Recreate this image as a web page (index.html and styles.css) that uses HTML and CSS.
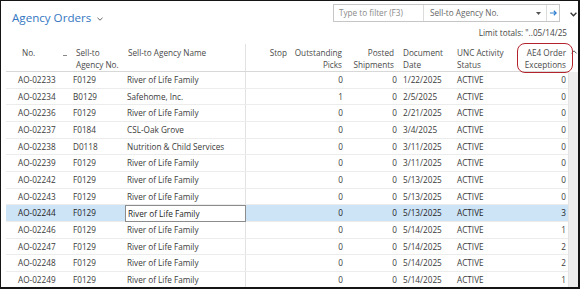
FILE: index.html
```html
<!DOCTYPE html>
<html lang="en">
<head>
    <meta charset="UTF-8">
    <title>Agency Orders</title>
    <link rel="stylesheet" href="styles.css">
</head>
<body>
<div class="page">
    <!-- title and filter -->
    <div class="topbar">
        <div class="title">Agency Orders
            <svg class="title-caret" width="6" height="4" viewBox="0 0 6 4"><path d="M0.5 0.8 L3 3.2 L5.5 0.8" fill="none" stroke="#666" stroke-width="1"/></svg>
        </div>
        <div class="filter">
            <div class="filter-input">Type to filter (F3)</div>
            <div class="filter-field">
                <span>Sell-to Agency No.</span>
                <svg width="5" height="3" viewBox="0 0 5 3"><path d="M0 0 L5 0 L2.5 3 Z" fill="#555"/></svg>
            </div>
            <div class="filter-go">
                <svg width="7" height="6" viewBox="0 0 7 6"><path d="M0 3 H6 M3.8 0.8 L6.2 3 L3.8 5.2" fill="none" stroke="#2f7fd0" stroke-width="1.2"/></svg>
            </div>
        </div>
        <div class="collapse">
            <svg width="7" height="5" viewBox="0 0 7 5"><path d="M0.6 0.8 L3.5 3.8 L6.4 0.8" fill="none" stroke="#333" stroke-width="1.3"/></svg>
        </div>
    </div>

    <div class="limit">Limit totals: "..05/14/25</div>

    <!-- list -->
    <div class="list">
        <div class="grid">
            <div class="head">
                <div class="c1 sortcol"><span>No.</span><span class="sort-mark"></span></div>
                <div class="c2">Sell-to<br>Agency No.</div>
                <div class="c3">Sell-to Agency Name</div>
                <div class="c4">Stop</div>
                <div class="c5">Outstanding<br>Picks</div>
                <div class="c6">Posted<br>Shipments</div>
                <div class="c7">Document<br>Date</div>
                <div class="c8">UNC Activity<br>Status</div>
                <div class="c9 marked">AE4 Order<br>Exceptions<span class="mark"></span></div>
            </div>

            <div class="row">
                <div class="c1">AO-02233</div><div class="c2">F0129</div><div class="c3">River of Life Family</div><div class="c4"></div>
                <div class="c5">0</div><div class="c6">0</div><div class="c7">1/22/2025</div><div class="c8">ACTIVE</div><div class="c9">0</div>
            </div>
            <div class="row">
                <div class="c1">AO-02234</div><div class="c2">B0129</div><div class="c3">Safehome, Inc.</div><div class="c4"></div>
                <div class="c5">1</div><div class="c6">0</div><div class="c7">2/5/2025</div><div class="c8">ACTIVE</div><div class="c9">0</div>
            </div>
            <div class="row">
                <div class="c1">AO-02236</div><div class="c2">F0129</div><div class="c3">River of Life Family</div><div class="c4"></div>
                <div class="c5">0</div><div class="c6">0</div><div class="c7">2/21/2025</div><div class="c8">ACTIVE</div><div class="c9">0</div>
            </div>
            <div class="row">
                <div class="c1">AO-02237</div><div class="c2">F0184</div><div class="c3">CSL-Oak Grove</div><div class="c4"></div>
                <div class="c5">0</div><div class="c6">0</div><div class="c7">3/4/2025</div><div class="c8">ACTIVE</div><div class="c9">0</div>
            </div>
            <div class="row">
                <div class="c1">AO-02238</div><div class="c2">D0118</div><div class="c3">Nutrition &amp; Child Services</div><div class="c4"></div>
                <div class="c5">0</div><div class="c6">0</div><div class="c7">3/11/2025</div><div class="c8">ACTIVE</div><div class="c9">0</div>
            </div>
            <div class="row">
                <div class="c1">AO-02239</div><div class="c2">F0129</div><div class="c3">River of Life Family</div><div class="c4"></div>
                <div class="c5">0</div><div class="c6">0</div><div class="c7">3/11/2025</div><div class="c8">ACTIVE</div><div class="c9">0</div>
            </div>
            <div class="row">
                <div class="c1">AO-02242</div><div class="c2">F0129</div><div class="c3">River of Life Family</div><div class="c4"></div>
                <div class="c5">0</div><div class="c6">0</div><div class="c7">5/13/2025</div><div class="c8">ACTIVE</div><div class="c9">0</div>
            </div>
            <div class="row">
                <div class="c1">AO-02243</div><div class="c2">F0129</div><div class="c3">River of Life Family</div><div class="c4"></div>
                <div class="c5">0</div><div class="c6">0</div><div class="c7">5/13/2025</div><div class="c8">ACTIVE</div><div class="c9">0</div>
            </div>
            <div class="row selected">
                <div class="c1">AO-02244</div><div class="c2">F0129</div><div class="c3 focus">River of Life Family</div><div class="c4"></div>
                <div class="c5">0</div><div class="c6">0</div><div class="c7">5/13/2025</div><div class="c8">ACTIVE</div><div class="c9">3</div>
            </div>
            <div class="row">
                <div class="c1">AO-02246</div><div class="c2">F0129</div><div class="c3">River of Life Family</div><div class="c4"></div>
                <div class="c5">0</div><div class="c6">0</div><div class="c7">5/14/2025</div><div class="c8">ACTIVE</div><div class="c9">1</div>
            </div>
            <div class="row">
                <div class="c1">AO-02247</div><div class="c2">F0129</div><div class="c3">River of Life Family</div><div class="c4"></div>
                <div class="c5">0</div><div class="c6">0</div><div class="c7">5/14/2025</div><div class="c8">ACTIVE</div><div class="c9">2</div>
            </div>
            <div class="row">
                <div class="c1">AO-02248</div><div class="c2">F0129</div><div class="c3">River of Life Family</div><div class="c4"></div>
                <div class="c5">0</div><div class="c6">0</div><div class="c7">5/14/2025</div><div class="c8">ACTIVE</div><div class="c9">2</div>
            </div>
            <div class="row">
                <div class="c1">AO-02249</div><div class="c2">F0129</div><div class="c3">River of Life Family</div><div class="c4"></div>
                <div class="c5">0</div><div class="c6">0</div><div class="c7">5/14/2025</div><div class="c8">ACTIVE</div><div class="c9">1</div>
            </div>
        </div>

        <!-- scrollbar -->
        <div class="scroll">
            <div class="scroll-head">
                <svg width="6" height="4" viewBox="0 0 6 4"><path d="M0.5 3.4 L3 0.8 L5.5 3.4" fill="none" stroke="#555" stroke-width="1"/></svg>
            </div>
            <div class="scroll-track"></div>
        </div>
    </div>
</div>
</body>
</html>
```

FILE: styles.css
```css
body {
    margin: 0;
    background: #fff;
}

.page {
    width: 580px;
    height: 289px;
    box-sizing: border-box;
    border: 1px solid #151515;
    border-right-width: 2px;
    border-bottom-width: 2px;
    overflow: hidden;
    font-family: "Open Sans", "Noto Sans", sans-serif;
    font-size: 8.2px;
    color: #3a3a3a;
}

/* title bar */
.topbar {
    display: flex;
    align-items: flex-start;
    height: 26px;
}

.title {
    flex: 1;
    margin-top: 9px;
    padding-left: 11px;
    font-size: 11.6px;
    line-height: 16px;
    color: #3476c2;
    display: flex;
    align-items: center;
}

.title-caret {
    margin-left: 6px;
    margin-top: 1px;
}

.filter {
    margin-top: 3px;
    width: 227px;
    height: 18px;
    box-sizing: border-box;
    border: 1px solid #c6c6c6;
    display: flex;
    line-height: 16px;
}

.filter-input {
    width: 90px;
    padding-left: 5px;
    box-sizing: border-box;
    color: #8a8a8a;
    border-right: 1px solid #dcdcdc;
}

.filter-field {
    flex: 1;
    padding: 0 5px 0 6px;
    display: flex;
    align-items: center;
    justify-content: space-between;
    color: #666;
    border-right: 1px solid #dcdcdc;
}

.filter-go {
    width: 12px;
    display: flex;
    align-items: center;
    justify-content: center;
}

.collapse {
    width: 18px;
    height: 26px;
    display: flex;
    align-items: center;
    justify-content: flex-end;
    padding-right: 1px;
    box-sizing: border-box;
}

.limit {
    height: 12px;
    line-height: 12px;
    text-align: right;
    padding-right: 11px;
    color: #444;
    margin-bottom: 5px;
}

/* list */
.list {
    display: flex;
    margin-left: 5px;
}

.grid {
    width: 562px;
}

.head, .row {
    display: grid;
    grid-template-columns: 64px 54px 122px 44px 55px 53px 54px 60px 56px;
    box-sizing: border-box;
}

.head {
    height: 28px;
    padding-top: 3px;
    line-height: 12px;
    color: #4a4a4a;
    border-bottom: 1px solid #d8d8d8;
    white-space: nowrap;
}

.row {
    height: 16.67px;
    line-height: 15px;
    border-bottom: 1px solid #ececec;
    white-space: nowrap;
}

.head .c3 {
    align-self: stretch;
    margin-top: -3px;
    padding-top: 3px;
}

.c3 {
    border-right: 1px solid #e2e2e2;
}

.row .c1 { padding-left: 12px; }
.row .c2 { padding-left: 3px; }
.row .c3 { padding-left: 3px; }
.row .c4 { text-align: right; padding-right: 3px; }
.row .c5 { text-align: right; padding-right: 2px; }
.row .c6 { text-align: right; padding-right: 1px; }
.row .c7 { padding-left: 5px; }
.row .c8 { padding-left: 5px; }
.row .c9 { text-align: right; padding-right: 2px; }

.head .c1 { padding-left: 16px; padding-right: 3px; }
.head .c2 { padding-left: 6px; }
.head .c3 { padding-left: 4px; }
.head .c4 { text-align: right; padding-right: 3px; }
.head .c5 { text-align: right; padding-right: 3px; }
.head .c6 { text-align: right; padding-right: 4px; }
.head .c7 { padding-left: 5px; }
.head .c8 { padding-left: 5px; }
.head .c9 { text-align: right; padding-right: 2px; }

.sortcol {
    display: flex;
    justify-content: space-between;
}

.sort-mark {
    width: 4px;
    height: 1px;
    margin-top: 8px;
    background: #888;
}

.marked {
    position: relative;
}

/* red annotation around the header */
.mark {
    position: absolute;
    left: 5px;
    right: -5px;
    top: -4px;
    bottom: -2px;
    border: 1.5px solid #b3232c;
    border-radius: 8px;
}

.selected {
    background: #cde3f6;
    color: #1e1e1e;
}

.selected .focus {
    background: #fff;
    border: 1px solid #8c8c8c;
    margin-left: 1px;
    padding-left: 2px;
}

/* scrollbar */
.scroll {
    width: 10px;
    display: flex;
    flex-direction: column;
}

.scroll-head {
    height: 28px;
    display: flex;
    justify-content: center;
    padding-top: 6px;
    padding-left: 2px;
    box-sizing: border-box;
}

.scroll-track {
    flex: 1;
    background: #eeeeee;
    border-left: 1px solid #e4e4e4;
}
```
